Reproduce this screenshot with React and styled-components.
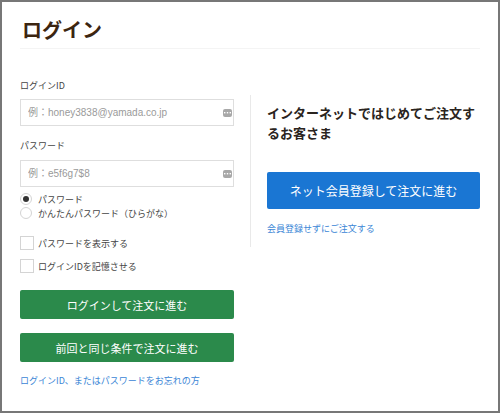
import React, { useState } from "react";
import styled, { createGlobalStyle } from "styled-components";

const GlobalStyle = createGlobalStyle`
  html, body {
    margin: 0;
    padding: 0;
    background: #fff;
  }
  body {
    font-family: "Noto Sans CJK JP", "Noto Sans", sans-serif;
    color: #333;
  }
  * {
    box-sizing: border-box;
  }
`;

const Frame = styled.div`
  width: 500px;
  height: 413px;
  border: 2px solid #777;
  padding: 0 18px;
  background: #fff;
`;

const Header = styled.div`
  padding: 14px 0 4px;
  border-bottom: 1px solid #f4f4f4;
`;

const Title = styled.h1`
  margin: 0;
  font-size: 20px;
  line-height: 28px;
  font-weight: 700;
  color: #3c2510;
  padding-left: 2px;
`;

const Columns = styled.div`
  display: flex;
  align-items: flex-start;
  margin-top: 29px;
`;

const LeftCol = styled.div`
  width: 214px;
  display: flex;
  flex-direction: column;
`;

const RightCol = styled.div`
  flex: 1;
  margin-left: 16px;
  margin-top: 17px;
  padding: 8px 0 11px 16px;
  border-left: 1px solid #e9e9e9;
`;

const Label = styled.div`
  font-size: 9px;
  line-height: 16px;
  color: #444;
  margin-top: ${(p) => p.$top || 0}px;
  margin-bottom: ${(p) => p.$bottom || 0}px;
`;

const InputBox = styled.div`
  height: 27px;
  border: 1px solid #dedede;
  display: flex;
  align-items: center;
  padding: 0 0 0 7px;
`;

const Field = styled.input`
  flex: 1;
  min-width: 0;
  border: none;
  outline: none;
  background: transparent;
  font-family: "Liberation Sans", "Noto Sans CJK JP", sans-serif;
  font-size: 10px;
  color: #333;
  padding: 0;

  &::placeholder {
    color: #9a9a9a;
  }
`;

const KeyIcon = styled.span`
  width: 9px;
  height: 8px;
  margin-right: 1px;
  border-radius: 2px;
  background: #a8a8a8;
  display: flex;
  align-items: center;
  justify-content: center;
`;

const RadioGroup = styled.div`
  margin-top: 5px;
  display: flex;
  flex-direction: column;
`;

const ChoiceRow = styled.label`
  display: flex;
  align-items: center;
  height: ${(p) => p.$h}px;
  margin-top: ${(p) => p.$top || 0}px;
  font-size: 9px;
  color: #444;
  cursor: pointer;
`;

const RadioMark = styled.span`
  width: 12px;
  height: 12px;
  border-radius: 50%;
  border: 1px solid #d4d4d4;
  margin-right: 6px;
  display: flex;
  align-items: center;
  justify-content: center;

  &::after {
    content: "";
    width: 6px;
    height: 6px;
    border-radius: 50%;
    background: ${(p) => (p.$on ? "#333" : "transparent")};
  }
`;

const CheckMark = styled.span`
  width: 14px;
  height: 14px;
  border: 1px solid #d4d4d4;
  margin-right: 4px;
  display: flex;
  align-items: center;
  justify-content: center;
  font-size: 10px;
  color: #333;
`;

const ActionButton = styled.button`
  width: 100%;
  height: ${(p) => p.$h || 29}px;
  margin-top: ${(p) => p.$top || 0}px;
  border: none;
  border-radius: 2px;
  background: ${(p) => p.$bg};
  color: #fff;
  font-family: "Noto Sans CJK JP", sans-serif;
  font-size: ${(p) => p.$size || 11}px;
  cursor: pointer;
`;

const TextLink = styled.a`
  display: block;
  margin-top: ${(p) => p.$top || 0}px;
  font-size: 9px;
  line-height: 14px;
  color: #3b86d6;
  text-decoration: none;
`;

const Lead = styled.h2`
  margin: 0;
  font-size: 13px;
  line-height: 20px;
  font-weight: 700;
  color: #2a2420;
`;

function Dots() {
  return (
    <svg width="7" height="2" viewBox="0 0 7 2">
      <rect x="0" y="0" width="1.4" height="1.4" fill="#fff" />
      <rect x="2.8" y="0" width="1.4" height="1.4" fill="#fff" />
      <rect x="5.6" y="0" width="1.4" height="1.4" fill="#fff" />
    </svg>
  );
}

function App() {
  const [mode, setMode] = useState("password");
  const [showPw, setShowPw] = useState(false);
  const [remember, setRemember] = useState(false);

  return (
    <>
      <GlobalStyle />
      <Frame>
        <Header>
          <Title>ログイン</Title>
        </Header>
        <Columns>
          <LeftCol>
            <Label $bottom={5}>ログインID</Label>
            <InputBox>
              <Field placeholder="例：honey3838@yamada.co.jp" />
              <KeyIcon>
                <Dots />
              </KeyIcon>
            </InputBox>
            <Label $top={12} $bottom={6}>
              パスワード
            </Label>
            <InputBox>
              <Field
                type={showPw ? "text" : "password"}
                placeholder="例：e5f6g7$8"
              />
              <KeyIcon>
                <Dots />
              </KeyIcon>
            </InputBox>
            <RadioGroup>
              <ChoiceRow $h={14} onClick={() => setMode("password")}>
                <RadioMark $on={mode === "password"} />
                パスワード
              </ChoiceRow>
              <ChoiceRow $h={14} onClick={() => setMode("easy")}>
                <RadioMark $on={mode === "easy"} />
                かんたんパスワード（ひらがな）
              </ChoiceRow>
            </RadioGroup>
            <ChoiceRow $h={14} $top={16} onClick={() => setShowPw(!showPw)}>
              <CheckMark>{showPw ? "✓" : ""}</CheckMark>
              パスワードを表示する
            </ChoiceRow>
            <ChoiceRow $h={14} $top={9} onClick={() => setRemember(!remember)}>
              <CheckMark>{remember ? "✓" : ""}</CheckMark>
              ログインIDを記憶させる
            </ChoiceRow>
            <ActionButton $bg="#2b8a4b" $top={17}>
              ログインして注文に進む
            </ActionButton>
            <ActionButton $bg="#2b8a4b" $top={14}>
              前回と同じ条件で注文に進む
            </ActionButton>
            <TextLink href="#" $top={12}>
              ログインID、またはパスワードをお忘れの方
            </TextLink>
          </LeftCol>
          <RightCol>
            <Lead>インターネットではじめてご注文するお客さま</Lead>
            <ActionButton $bg="#1a76d3" $h={37} $top={29} $size={12}>
              ネット会員登録して注文に進む
            </ActionButton>
            <TextLink href="#" $top={13}>
              会員登録せずにご注文する
            </TextLink>
          </RightCol>
        </Columns>
      </Frame>
    </>
  );
}

export default App;
